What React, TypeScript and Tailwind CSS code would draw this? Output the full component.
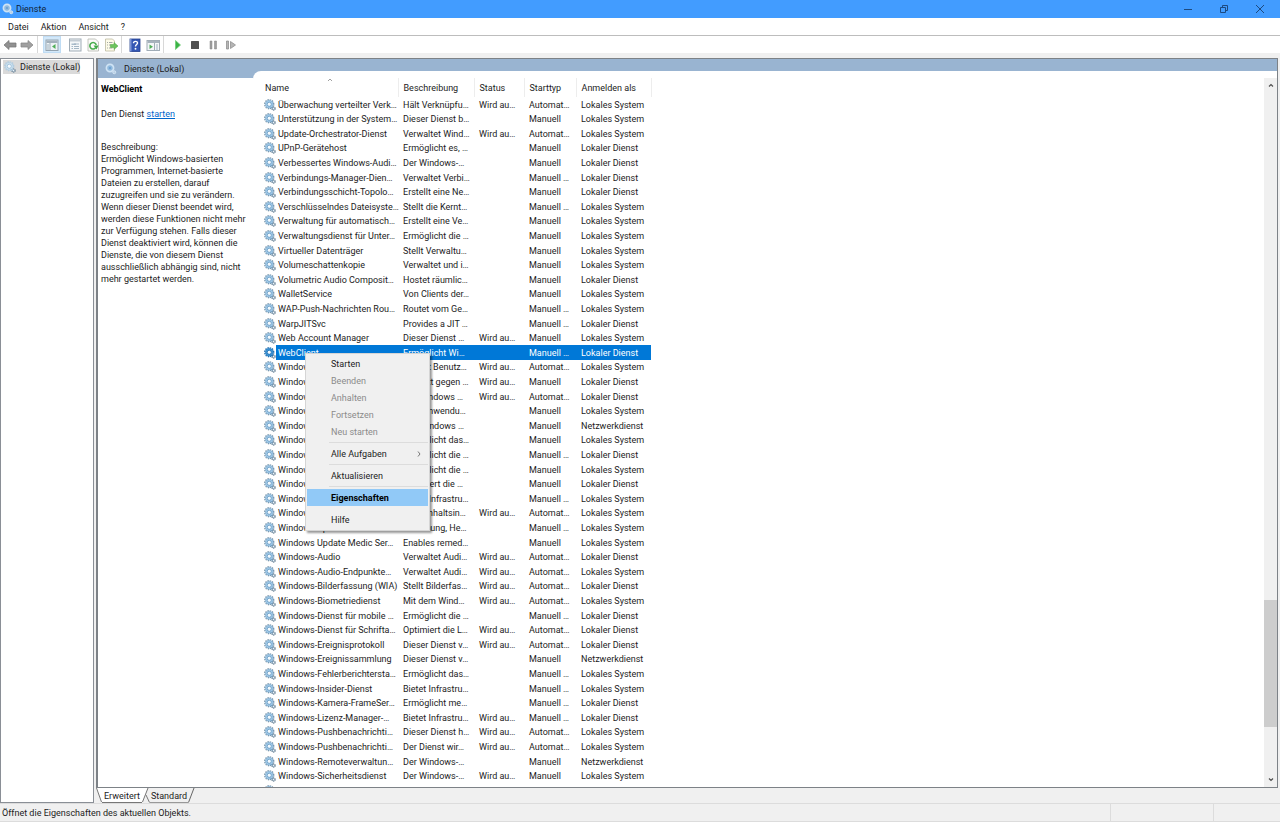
import { useState, type ReactNode } from 'react';
import clsx from 'clsx';

type Service = [name: string, description: string, status: string, startType: string, logOn: string];

const SYS = 'Lokales System';
const LOC = 'Lokaler Dienst';
const NET = 'Netzwerkdienst';
const RUN = 'Wird au…';
const AUTO = 'Automat…';
const MAN = 'Manuell';
const MANT = 'Manuell …';

const services: Service[] = [
  ['Überwachung verteilter Verk…', 'Hält Verknüpfu…', RUN, AUTO, SYS],
  ['Unterstützung in der System…', 'Dieser Dienst b…', '', MAN, SYS],
  ['Update-Orchestrator-Dienst', 'Verwaltet Wind…', RUN, AUTO, SYS],
  ['UPnP-Gerätehost', 'Ermöglicht es, …', '', MAN, LOC],
  ['Verbessertes Windows-Audi…', 'Der Windows-…', '', MAN, LOC],
  ['Verbindungs-Manager-Dien…', 'Verwaltet Verbi…', '', MANT, LOC],
  ['Verbindungsschicht-Topolo…', 'Erstellt eine Ne…', '', MAN, LOC],
  ['Verschlüsselndes Dateisyste…', 'Stellt die Kernt…', '', MANT, SYS],
  ['Verwaltung für automatisch…', 'Erstellt eine Ve…', '', MAN, SYS],
  ['Verwaltungsdienst für Unter…', 'Ermöglicht die …', '', MAN, SYS],
  ['Virtueller Datenträger', 'Stellt Verwaltu…', '', MAN, SYS],
  ['Volumeschattenkopie', 'Verwaltet und i…', '', MAN, SYS],
  ['Volumetric Audio Composit…', 'Hostet räumlic…', '', MAN, LOC],
  ['WalletService', 'Von Clients der…', '', MAN, SYS],
  ['WAP-Push-Nachrichten Rou…', 'Routet vom Ge…', '', MANT, SYS],
  ['WarpJITSvc', 'Provides a JIT …', '', MANT, LOC],
  ['Web Account Manager', 'Dieser Dienst …', RUN, MAN, SYS],
  ['WebClient', 'Ermöglicht Wi…', '', MANT, LOC],
  ['Windows Driver', 'Erstellt Benutz…', RUN, AUTO, SYS],
  ['Windows Defender', 'Schützt gegen …', RUN, MAN, LOC],
  ['Windows Firewall', 'Die Windows …', RUN, AUTO, LOC],
  ['Windows Installer', 'Eine Anwendu…', '', MAN, SYS],
  ['Windows Media', 'Der Windows …', '', MAN, NET],
  ['Windows Mobile', 'Ermöglicht das…', '', MAN, SYS],
  ['Windows Mobile', 'Ermöglicht die …', '', MANT, LOC],
  ['Windows Modules', 'Ermöglicht die …', '', MAN, SYS],
  ['Windows Presentation', 'Optimiert die …', '', MAN, LOC],
  ['Windows Pushdienst', 'Bietet Infrastru…', '', MANT, SYS],
  ['Windows Search', 'Stellt Inhaltsin…', RUN, AUTO, SYS],
  ['Windows Update', 'Erkennung, He…', '', MANT, SYS],
  ['Windows Update Medic Ser…', 'Enables remed…', '', MAN, SYS],
  ['Windows-Audio', 'Verwaltet Audi…', RUN, AUTO, LOC],
  ['Windows-Audio-Endpunkte…', 'Verwaltet Audi…', RUN, AUTO, SYS],
  ['Windows-Bilderfassung (WIA)', 'Stellt Bilderfas…', RUN, AUTO, LOC],
  ['Windows-Biometriedienst', 'Mit dem Wind…', RUN, AUTO, SYS],
  ['Windows-Dienst für mobile …', 'Ermöglicht die …', '', MANT, LOC],
  ['Windows-Dienst für Schrifta…', 'Optimiert die L…', RUN, AUTO, LOC],
  ['Windows-Ereignisprotokoll', 'Dieser Dienst v…', RUN, AUTO, LOC],
  ['Windows-Ereignissammlung', 'Dieser Dienst v…', '', MAN, NET],
  ['Windows-Fehlerberichtersta…', 'Ermöglicht das…', '', MANT, SYS],
  ['Windows-Insider-Dienst', 'Bietet Infrastru…', '', MANT, SYS],
  ['Windows-Kamera-FrameSer…', 'Ermöglicht me…', '', MANT, LOC],
  ['Windows-Lizenz-Manager-…', 'Bietet Infrastru…', RUN, MANT, LOC],
  ['Windows-Pushbenachrichti…', 'Dieser Dienst h…', RUN, AUTO, SYS],
  ['Windows-Pushbenachrichti…', 'Der Dienst wir…', RUN, AUTO, SYS],
  ['Windows-Remoteverwaltun…', 'Der Windows-…', '', MAN, NET],
  ['Windows-Sicherheitsdienst', 'Der Windows-…', RUN, MAN, SYS],
  ['Windows-Sofortverbindung', 'Stellt Windows…', '', MANT, LOC],
];

type MenuEntry = { label: string; disabled?: boolean; bold?: boolean; submenu?: boolean };

const menuGroups: MenuEntry[][] = [
  [
    { label: 'Starten' },
    { label: 'Beenden', disabled: true },
    { label: 'Anhalten', disabled: true },
    { label: 'Fortsetzen', disabled: true },
    { label: 'Neu starten', disabled: true },
  ],
  [{ label: 'Alle Aufgaben', submenu: true }],
  [{ label: 'Aktualisieren' }],
  [{ label: 'Eigenschaften', bold: true }],
  [{ label: 'Hilfe' }],
];

// toothed ring with a smaller wheel at the lower right
function GearIcon({ className, light, active }: { className?: string; light?: boolean; active?: boolean }) {
  const teeth = light ? '#b3cde0' : active ? '#1f6cab' : '#7793a8';
  const body = light ? '#cfe3f1' : active ? '#3f97d8' : '#a6cdea';
  const edge = light ? '#9dbfd8' : active ? '#1c6fb4' : '#6a9dc4';
  return (
    <svg viewBox="0 0 24 24" className={clsx('shrink-0', className)} aria-hidden="true">
      <circle cx="19" cy="19" r="3.4" fill="#a9bccb" stroke="#71889a" strokeWidth="2.4" strokeDasharray="2 1.4" />
      <circle cx="19" cy="19" r="1.3" fill="#eef5fa" />
      <circle cx="10.5" cy="10.5" r="9" fill="none" stroke={teeth} strokeWidth="2.6" strokeDasharray="2.8 1.9" />
      <circle cx="10.5" cy="10.5" r="7.8" fill={body} stroke={edge} strokeWidth="1" />
      <circle cx="10.5" cy="10.5" r="4.2" fill="#f4faff" stroke={edge} strokeWidth="1.8" />
      <path d="M13 15.500l4 4" stroke={edge} strokeWidth="1.6" />
    </svg>
  );
}

function RingIcon({ className }: { className?: string }) {
  return (
    <svg viewBox="0 0 24 24" className={clsx('shrink-0', className)} aria-hidden="true">
      <circle cx="10" cy="10" r="7.2" fill="#8fb8dc" stroke="#cfe3f4" strokeWidth="3.4" />
      <circle cx="10" cy="10" r="3.6" fill="#6fa3d3" stroke="#a3c6e4" strokeWidth="1.2" />
      <circle cx="18.500" cy="18.500" r="3" fill="#b7cfe4" stroke="#dbe9f5" strokeWidth="1.6" />
    </svg>
  );
}

function ToolButton({ label, active, className, children }: { label: string; active?: boolean; className?: string; children: ReactNode }) {
  return (
    <button
      type="button"
      aria-label={label}
      className={clsx('flex h-[17px] w-[18px] items-center justify-center', active && 'border border-[#bfdcf4] bg-[#d3e8f9]', className)}
    >
      <svg viewBox="0 0 28 28" className="h-[14px] w-[14px] shrink-0">{children}</svg>
    </button>
  );
}

function Toolbar() {
  return (
    <div role="toolbar" aria-label="Werkzeuge" className="flex h-[17px] shrink-0 items-center bg-white pl-[1px]">
      <ToolButton label="Zurück">
        <path d="M2 14 12 5v5h14v8H12v5z" fill="#919191" stroke="#777" strokeWidth="1.5" />
      </ToolButton>
      <ToolButton label="Vorwärts" className="-ml-px">
        <path d="M26 14 16 5v5H2v8h14v5z" fill="#a0a0a0" stroke="#858585" strokeWidth="1.5" />
      </ToolButton>
      <span className="ml-px h-full w-px bg-[#d8d8d8]" />
      <ToolButton label="Konsolenstruktur" active className="ml-[5px]">
        <rect x="2" y="4" width="24" height="21" fill="#eef3f6" stroke="#93a3b0" strokeWidth="2" />
        <path d="M3 5h22v5H3z" fill="#a3b1bc" />
        <path d="M10 10v14" stroke="#a0afbb" strokeWidth="2" />
        <path d="M4 14h4M4 18h4M4 22h4" stroke="#8ba3b6" strokeWidth="1.6" />
        <path d="m21 12-7 5 7 5z" fill="#4fae58" />
      </ToolButton>
      <ToolButton label="Eigenschaften" className="ml-[5px]">
        <rect x="3" y="2" width="23" height="24" fill="#f4f7f9" stroke="#a0acb6" strokeWidth="2" />
        <path d="M4 4h21v3H4z" fill="#c3ccd4" />
        <path d="M7 11h9v3H7z" fill="#a9bccb" />
        <path d="M12 12h10M7 17h3M12 17h10M7 21h3M12 21h10" stroke="#9aaebe" strokeWidth="1.8" />
      </ToolButton>
      <ToolButton label="Aktualisieren">
        <path d="M4 2h15l6 6v18H4z" fill="#fbfbf8" stroke="#b5b8b0" strokeWidth="1.6" />
        <path d="M19 20a6.500 6.500 0 1 1 1.500-6" fill="none" stroke="#49ad4e" strokeWidth="3.2" />
        <path d="m15 15h10l-4 8z" fill="#3fa845" />
      </ToolButton>
      <ToolButton label="Liste exportieren">
        <path d="M3 2h14l4 4v20H3z" fill="#fdfbe8" stroke="#bdbaa1" strokeWidth="1.6" />
        <path d="M6 9h2M10 9h7M6 14h2M10 14h4M6 20h2M10 20h7" stroke="#9a9f9f" strokeWidth="1.8" />
        <path d="M13 13h7V9l8 7-8 7v-4h-7z" fill="#6cc45c" stroke="#4ba442" />
      </ToolButton>
      <span className="ml-px h-full w-px bg-[#d8d8d8]" />
      <ToolButton label="Hilfe" className="ml-[4px]">
        <rect x="4" y="2" width="20" height="25" fill="#3457b4" stroke="#24408e" strokeWidth="1.6" />
        <path d="M4 2h3v25H4z" fill="#7d95d6" />
        <path d="M11 10.500c0-5 8-5 8-.5 0 3-4 3.500-4 7" fill="none" stroke="#fff" strokeWidth="2.800" />
        <circle cx="15" cy="21.500" r="1.900" fill="#fff" />
      </ToolButton>
      <ToolButton label="Aktionsbereich">
        <rect x="2" y="5" width="25" height="20" fill="#f3f6f8" stroke="#a0acb6" strokeWidth="2" />
        <path d="M3 6h23v4H3z" fill="#a7b3bd" />
        <path d="M17 10v14" stroke="#a0acb6" strokeWidth="2" />
        <path d="M20 14h4M20 18h4M20 22h4" stroke="#8ba3b6" strokeWidth="1.600" />
        <path d="m7 13 7 4.500-7 4.500z" fill="#4fae58" />
      </ToolButton>
      <span className="ml-px h-full w-px bg-[#d8d8d8]" />
      <ToolButton label="Dienst starten" className="ml-[5px]">
        <path d="m9 5 10 9-10 9z" fill="#3bb346" stroke="#6fcb73" strokeWidth="1.500" />
      </ToolButton>
      <ToolButton label="Dienst beenden" className="-ml-px">
        <rect x="6" y="6" width="16" height="16" rx="1" fill="#505050" />
      </ToolButton>
      <ToolButton label="Dienst anhalten">
        <path d="M8 6h4v16H8zM17 6h4v16h-4z" fill="#a0a0a0" stroke="#858585" />
      </ToolButton>
      <ToolButton label="Dienst neu starten">
        <path d="M5 6h4v16H5zM13 7l10 7-10 7z" fill="#b5b5b5" stroke="#8c8c8c" strokeWidth="1.500" />
      </ToolButton>
    </div>
  );
}

function TitleBar() {
  return (
    <header className="flex h-[18px] shrink-0 items-center bg-[#429cff]">
      <RingIcon className="ml-[2px] h-3 w-3" />
      <h1 className="ml-[2px] flex-1 text-[#10243c]">Dienste</h1>
      <button type="button" aria-label="Minimieren" className="flex h-full w-9 items-center justify-center">
        <svg viewBox="0 0 10 10" className="h-[10px] w-[10px]"><path d="M1 5.500h8" stroke="#1d4a80" /></svg>
      </button>
      <button type="button" aria-label="Wiederherstellen" className="flex h-full w-9 items-center justify-center">
        <svg viewBox="0 0 10 10" className="h-[10px] w-[10px]" fill="none" stroke="#1d4a80">
          <path d="M1.500 3.500h5v5h-5zM3.500 3.500v-2h5v5h-2" />
        </svg>
      </button>
      <button type="button" aria-label="Schließen" className="mr-[2px] flex h-full w-9 items-center justify-center">
        <svg viewBox="0 0 10 10" className="h-[10px] w-[10px]"><path d="m1 1 8 8M9 1 1 9" stroke="#1d4a80" /></svg>
      </button>
    </header>
  );
}

function ContextMenu() {
  return (
    <div role="menu" className="absolute top-[282px] left-[52px] w-[125px] border border-[#d5d5d5] bg-[#f0f0f0] p-px pb-[2px] shadow-[2px_2px_2px_rgba(0,0,0,0.4)]">
      {menuGroups.map((group, i) => (
        <div key={i}>
          {i > 0 && <div className={clsx('my-[2px] ml-[22px] h-px', i < 4 && 'bg-[#dcdcdc]')} />}
          {group.map(item => (
            <button
              key={item.label}
              type="button"
              role="menuitem"
              disabled={item.disabled}
              className={clsx(
                'flex h-[17px] w-full items-center justify-between pt-px pr-[6px] pl-6 text-left',
                item.disabled && 'text-[#8b8b8b]',
                item.bold && 'bg-[#91c9f7] font-bold text-black',
              )}
            >
              {item.label}
              {item.submenu && (
                <svg viewBox="0 0 6 8" className="h-2 w-[6px]"><path d="m2 1.500 2 2.500-2 2.500" fill="none" stroke="#777" /></svg>
              )}
            </button>
          ))}
        </div>
      ))}
    </div>
  );
}

function ServiceTable({ selected, onSelect }: { selected: string; onSelect: (name: string) => void }) {
  return (
    <table className="w-[398px] table-fixed border-collapse">
      <colgroup>
        <col className="w-[23px]" />
        <col className="w-[122px]" />
        <col className="w-[76px]" />
        <col className="w-[50px]" />
        <col className="w-[52px]" />
        <col className="w-[75px]" />
      </colgroup>
      <thead>
        <tr className="h-[19px] text-left [&>th]:border-r [&>th]:border-[#ededed] [&>th]:p-0 [&>th]:pt-px [&>th]:pl-[5px] [&>th]:font-normal">
          <th colSpan={2} className="relative !pl-3">
            Name
            <svg viewBox="0 0 6 4" className="absolute top-0 left-[74px] h-1 w-[6px]"><path d="m1 3 2-2 2 2" fill="none" stroke="#888" strokeWidth=".8" /></svg>
          </th>
          <th>Beschreibung</th>
          <th>Status</th>
          <th>Starttyp</th>
          <th>Anmelden als</th>
        </tr>
      </thead>
      <tbody className="[&>tr]:h-[15px] [&>tr:nth-child(5n+2)]:h-[14px] [&>tr:nth-child(5n+4)]:h-[14px]">
        {services.map(([name, ...cells], i) => {
          const active = name === selected;
          return (
            <tr key={i} onClick={() => onSelect(name)} className={clsx('leading-[14px] whitespace-nowrap', active && 'text-white')}>
              <td className="p-0 pl-[11px]">
                <GearIcon active={active} className="h-3 w-3" />
              </td>
              <td className={clsx('p-0 pl-[2px]', active && 'bg-[#0078d7]')}>{name}</td>
              {cells.map((cell, j) => (
                <td key={j} className={clsx('p-0 pl-[5px]', active && 'bg-[#0078d7]')}>{cell}</td>
              ))}
            </tr>
          );
        })}
      </tbody>
    </table>
  );
}

function ScrollBar() {
  return (
    <div className="mt-[7px] flex w-[13px] shrink-0 flex-col items-center bg-[#f0f0f0]">
      <button type="button" aria-label="Nach oben" className="flex h-[14px] w-full items-center justify-center">
        <svg viewBox="0 0 6 4" className="h-1 w-[6px]"><path d="m1 3.500 2-2 2 2" fill="none" stroke="#505050" strokeWidth="1.2" /></svg>
      </button>
      <div className="flex-[509]" />
      <div className="w-full flex-[127] bg-[#cdcdcd]" />
      <div className="flex-[46]" />
      <button type="button" aria-label="Nach unten" className="flex h-[14px] w-full items-center justify-center">
        <svg viewBox="0 0 6 4" className="h-1 w-[6px]"><path d="m1 .5 2 2 2-2" fill="none" stroke="#505050" strokeWidth="1.2" /></svg>
      </button>
    </div>
  );
}

function ViewTabs() {
  return (
    <div role="tablist" className="flex h-[15px] shrink-0 items-stretch">
      <svg viewBox="0 0 6 15" className="h-full w-[6px]"><path d="M0 0h6v14z" fill="#fff" /><path d="m.5 0 5 14" stroke="#777" /></svg>
      <button type="button" role="tab" aria-selected="true" className="border-b border-[#777] bg-white px-[2px] pt-[2px]">Erweitert</button>
      <svg viewBox="0 0 8 15" className="h-full w-2" fill="none">
        <path d="M0 0h6L0 14z" fill="#fff" />
        <path d="M.5 14 6 0M4 7l3.500 7.500" stroke="#777" />
      </svg>
      <button type="button" role="tab" aria-selected="false" className="border-b border-[#999] px-px pt-[2px]">Standard</button>
      <svg viewBox="0 0 7 15" className="h-full w-[7px]"><path d="M.5 14.500 6 0" stroke="#666" /></svg>
    </div>
  );
}

export default function App() {
  const [selected, setSelected] = useState('WebClient');

  return (
    <div className="flex h-screen flex-col overflow-hidden bg-[#f0f0f0] font-['Roboto','Open_Sans',sans-serif] text-[9px] leading-[12px] text-[#1c1c1c]">
      <TitleBar />
      <nav className="flex h-[18px] shrink-0 items-center gap-3 border-b border-[#bdbdbd] bg-white pl-2">
        <button type="button">Datei</button>
        <button type="button">Aktion</button>
        <button type="button">Ansicht</button>
        <button type="button">?</button>
      </nav>
      <Toolbar />

      <div className="mt-[5px] flex min-h-0 flex-1">
        <aside className="w-[94px] shrink-0 border border-[#8a8f96] bg-white">
          <a href="#lokal" className="mt-px ml-[2px] flex h-[14px] w-[77px] items-center gap-[4px] bg-[#dadada] pl-px">
            <GearIcon light className="h-3 w-3" />
            <span className="whitespace-nowrap">Dienste (Lokal)</span>
          </a>
        </aside>

        <div className="ml-[2px] flex min-w-0 flex-1 flex-col">
          <main className="mr-[2px] flex min-h-0 flex-1 border border-l-2 border-[#7d8287] bg-[#99b4d1]">
            <section className="flex w-[155px] shrink-0 flex-col">
              <h2 className="flex h-[19px] shrink-0 items-center gap-[7px] pt-px pl-[7px]">
                <RingIcon className="h-3 w-3" />
                Dienste (Lokal)
              </h2>
              <div className="flex-1 bg-white pt-[5px] pl-[3px] whitespace-nowrap">
                <h3 className="font-bold text-black">{selected}</h3>
                <p className="mt-[13px]">
                  Den Dienst <a href="#starten" className="text-[#0066cc] underline">starten</a>
                </p>
                <p className="mt-[21px]">Beschreibung:</p>
                <p className="whitespace-normal">
                  Ermöglicht Windows-basierten Programmen, Internet-basierte Dateien zu erstellen, darauf
                  zuzugreifen und sie zu verändern. Wenn dieser Dienst beendet wird, werden diese Funktionen nicht mehr
                  zur Verfügung stehen. Falls dieser Dienst deaktiviert wird, können die Dienste, die von diesem Dienst
                  ausschließlich abhängig sind, nicht mehr gestartet werden.
                </p>
              </div>
            </section>
            <section className="flex min-w-0 flex-1 flex-col pt-3">
              <div className="relative flex min-h-0 flex-1 rounded-tl-lg bg-white">
                <div className="min-w-0 flex-1 overflow-hidden pt-[7px]">
                  <ServiceTable selected={selected} onSelect={setSelected} />
                </div>
                <ScrollBar />
                <ContextMenu />
              </div>
            </section>
          </main>
          <ViewTabs />
        </div>
      </div>

      <footer className="flex h-[19px] shrink-0 items-center border-y border-[#dcdcdc] pl-[2px]">
        <span className="flex-1">Öffnet die Eigenschaften des aktuellen Objekts.</span>
        <span className="h-full w-[103px] border-l border-[#dcdcdc]" />
        <span className="h-full w-[67px] border-l border-[#dcdcdc]" />
      </footer>
    </div>
  );
}
